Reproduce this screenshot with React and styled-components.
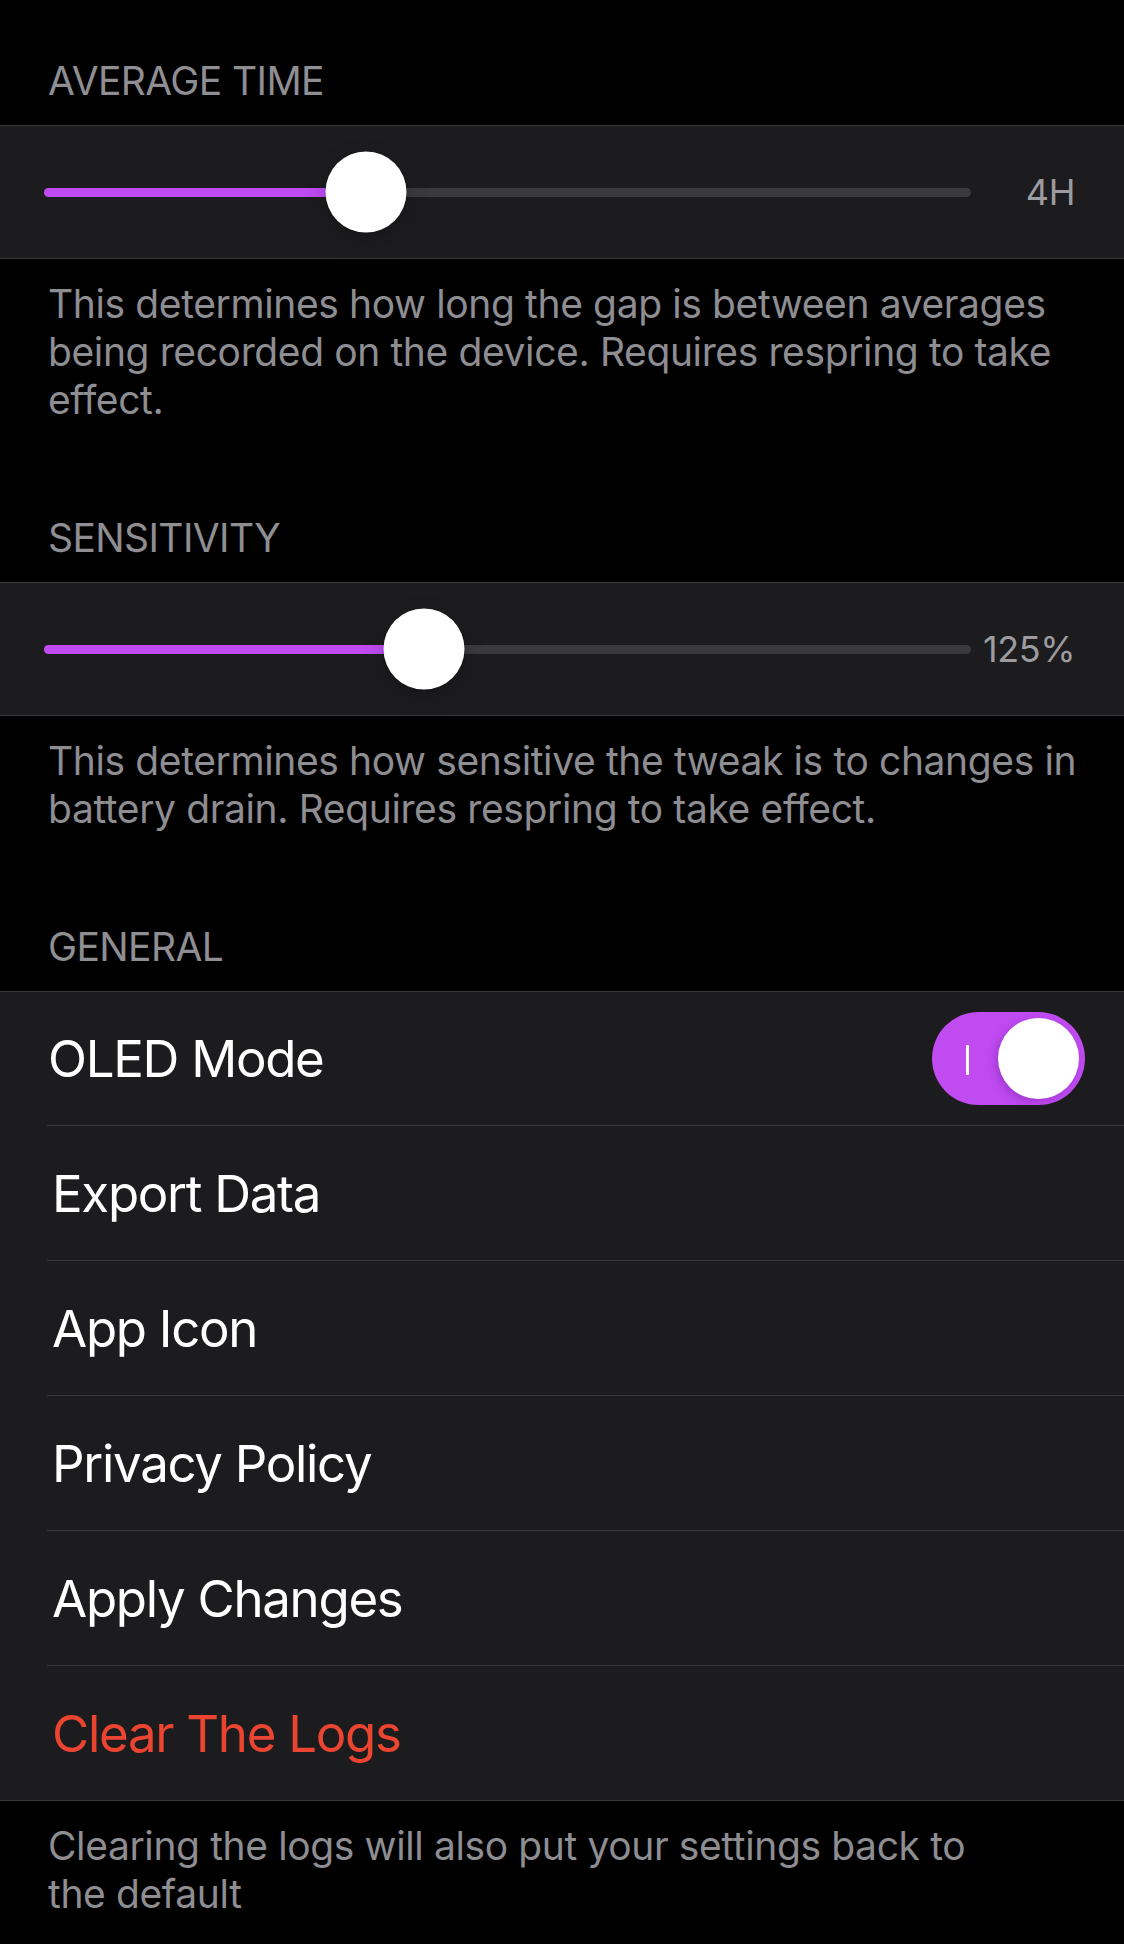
import styled, { createGlobalStyle } from 'styled-components';

const GlobalStyle = createGlobalStyle`
  html, body {
    margin: 0;
    padding: 0;
    background: #000;
  }
  body {
    font-family: Inter, "Noto Sans", "Liberation Sans", sans-serif;
    -webkit-font-smoothing: antialiased;
  }
`;

const Page = styled.div`
  width: 1124px;
  min-height: 1944px;
  background: #000;
  padding-top: 57px;
  box-sizing: border-box;
`;

const SectionHeader = styled.div`
  padding: 0 48px 20px;
  font-size: 39px;
  line-height: 48px;
  color: #8e8e93;
  text-transform: uppercase;
  letter-spacing: -0.6px;
`;

const Group = styled.div`
  background: #1c1c1e;
  border-top: 1px solid #3a3a3c;
  border-bottom: 1px solid #3a3a3c;
`;

const SectionFooter = styled.div`
  padding: 21px 38px 33px 48px;
  font-size: 39px;
  line-height: 48px;
  letter-spacing: -0.38px;
  color: #8d8d92;
  margin-bottom: ${(p) => (p.last ? '0' : '57px')};
`;

const SliderCell = styled.div`
  height: 132px;
  display: flex;
  align-items: center;
  gap: 12px;
  padding: 0 49px 0 44px;
`;

const Track = styled.div`
  position: relative;
  flex: 1;
  height: 9px;
  border-radius: 5px;
  background: #3a3a3e;
`;

const Fill = styled.div`
  height: 100%;
  border-radius: 5px;
  background: #bf4bf1;
`;

const Thumb = styled.div`
  position: absolute;
  top: 50%;
  width: 81px;
  height: 81px;
  border-radius: 50%;
  background: #fff;
  transform: translate(-50%, -50%);
  box-shadow: 0 9px 24px rgba(0, 0, 0, 0.18), 0 1px 3px rgba(0, 0, 0, 0.12);
`;

const SliderValue = styled.div`
  width: 92px;
  text-align: right;
  font-size: 36px;
  letter-spacing: -0.4px;
  color: #9b9ba0;
`;

const Row = styled.div`
  position: relative;
  height: ${(p) => (p.first ? '133px' : '134px')};
  display: flex;
  align-items: center;
  justify-content: space-between;
  padding: 0 39px 0 ${(p) => (p.button ? '52px' : '48px')};
  border-top: ${(p) => (p.first ? 'none' : '1px solid transparent')};

  &::before {
    content: ${(p) => (p.first ? 'none' : "''")};
    position: absolute;
    top: -1px;
    left: 47px;
    right: 0;
    height: 1px;
    background: #38383a;
  }
`;

const RowLabel = styled.span`
  font-size: 51px;
  letter-spacing: -1.3px;
  color: ${(p) => (p.destructive ? '#eb4430' : '#fff')};
`;

const Switch = styled.div`
  position: relative;
  width: 153px;
  height: 93px;
  border-radius: 47px;
  background: #bf4bf1;
  display: flex;
  align-items: center;
  justify-content: flex-end;
  padding: 0 6px;
  box-sizing: border-box;
`;

const SwitchOnMark = styled.span`
  position: absolute;
  left: 34px;
  top: 33px;
  width: 3px;
  height: 30px;
  background: #fff;
  border-radius: 1px;
`;

const SwitchKnob = styled.div`
  width: 81px;
  height: 81px;
  border-radius: 50%;
  background: #fff;
  box-shadow: -3px 3px 8px rgba(80, 0, 110, 0.25);
`;

const Slider = ({ value, label }) => (
  <SliderCell>
    <Track>
      <Fill style={{ width: `${value}%` }} />
      <Thumb style={{ left: `${value}%` }} />
    </Track>
    <SliderValue>{label}</SliderValue>
  </SliderCell>
);

const buttons = ['Export Data', 'App Icon', 'Privacy Policy', 'Apply Changes'];

export default function App() {
  return (
    <>
      <GlobalStyle />
      <Page>
        <SectionHeader>Average Time</SectionHeader>
        <Group>
          <Slider value={34.7} label="4H" />
        </Group>
        <SectionFooter>
          This determines how long the gap is between averages being recorded on the
          device. Requires respring to take effect.
        </SectionFooter>

        <SectionHeader>Sensitivity</SectionHeader>
        <Group>
          <Slider value={41} label="125%" />
        </Group>
        <SectionFooter>
          This determines how sensitive the tweak is to changes in battery drain.
          Requires respring to take effect.
        </SectionFooter>

        <SectionHeader>General</SectionHeader>
        <Group>
          <Row first>
            <RowLabel>OLED Mode</RowLabel>
            <Switch>
              <SwitchOnMark />
              <SwitchKnob />
            </Switch>
          </Row>
          {buttons.map((b) => (
            <Row key={b} button>
              <RowLabel>{b}</RowLabel>
            </Row>
          ))}
          <Row button>
            <RowLabel destructive>Clear The Logs</RowLabel>
          </Row>
        </Group>
        <SectionFooter last>
          Clearing the logs will also put your settings back to
          <br />
          the default
        </SectionFooter>
      </Page>
    </>
  );
}
